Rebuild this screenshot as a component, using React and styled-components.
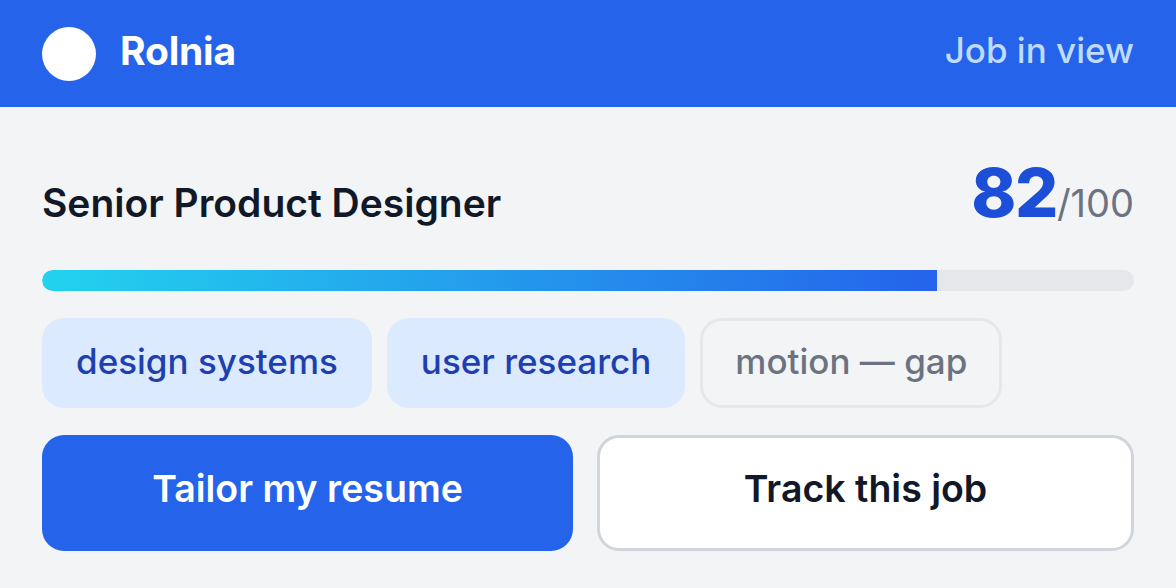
import React from 'react';
import styled, { createGlobalStyle } from 'styled-components';

const GlobalStyle = createGlobalStyle`
  html, body {
    margin: 0;
    padding: 0;
    background: #f3f4f6;
    font-family: Inter, "Noto Sans", sans-serif;
  }
`;

const tags = [
  { label: 'design systems', gap: false },
  { label: 'user research', gap: false },
  { label: 'motion — gap', gap: true },
];

const score = 82;

const App = () => {
  return (
    <Page>
      <GlobalStyle />
      <Header>
        <Brand>
          <Logo />
          <BrandName>Rolnia</BrandName>
        </Brand>
        <HeaderNote>Job in view</HeaderNote>
      </Header>
      <Content>
        <TitleRow>
          <JobTitle>Senior Product Designer</JobTitle>
          <Score>
            <ScoreValue>{score}</ScoreValue>
            <ScoreMax>/100</ScoreMax>
          </Score>
        </TitleRow>
        <Track>
          <Fill style={{ width: `${score}%` }} />
        </Track>
        <TagList>
          {tags.map((tag) => (
            <Tag key={tag.label} $gap={tag.gap}>
              {tag.label}
            </Tag>
          ))}
        </TagList>
        <Actions>
          <Button $primary>Tailor my resume</Button>
          <Button>Track this job</Button>
        </Actions>
      </Content>
    </Page>
  );
};

const Page = styled.div`
  width: 1176px;
  height: 588px;
  background: #f3f4f6;
  overflow: hidden;
`;

const Header = styled.header`
  height: 107px;
  padding: 0 42px;
  background: #2563eb;
  display: flex;
  align-items: center;
  justify-content: space-between;
`;

const Brand = styled.div`
  display: flex;
  align-items: center;
  gap: 24px;
`;

const Logo = styled.div`
  width: 54px;
  height: 54px;
  border-radius: 50%;
  background: #ffffff;
`;

const BrandName = styled.span`
  margin-bottom: 7px;
  color: #ffffff;
  font-size: 39px;
  font-weight: 700;
  letter-spacing: -0.2px;
`;

const HeaderNote = styled.span`
  margin-bottom: 8px;
  color: #bfdbfe;
  font-size: 35px;
  font-weight: 500;
`;

const Content = styled.main`
  padding: 0 42px;
  display: flex;
  flex-direction: column;
`;

const TitleRow = styled.div`
  display: flex;
  align-items: baseline;
  justify-content: space-between;
  margin-top: 51px;
  margin-bottom: 44px;
  line-height: 1;
`;

const JobTitle = styled.h1`
  margin: 0;
  color: #111827;
  font-size: 39px;
  font-weight: 600;
`;

const Score = styled.div`
  display: flex;
  align-items: baseline;
`;

const ScoreValue = styled.span`
  color: #1d4ed8;
  font-size: 68px;
  font-weight: 800;
  letter-spacing: -1.5px;
`;

const ScoreMax = styled.span`
  color: #6b7280;
  font-size: 38px;
  font-weight: 400;
`;

const Track = styled.div`
  height: 21px;
  border-radius: 11px;
  background: #e5e7eb;
  overflow: hidden;
`;

const Fill = styled.div`
  height: 100%;
  border-radius: 11px 0 0 11px;
  background: linear-gradient(90deg, #22d3ee, #2563eb);
`;

const TagList = styled.div`
  display: flex;
  gap: 15px;
  margin-top: 27px;
`;

const Tag = styled.span`
  box-sizing: border-box;
  height: 90px;
  padding: 0 ${(p) => (p.$gap ? '32px' : '31px')} 4px;
  display: flex;
  align-items: center;
  border-radius: 22px;
  font-size: 35px;
  font-weight: 500;
  color: ${(p) => (p.$gap ? '#6b7280' : '#1e40af')};
  background: ${(p) => (p.$gap ? 'transparent' : '#dbeafe')};
  border: 3px solid ${(p) => (p.$gap ? '#e5e7eb' : 'transparent')};
`;

const Actions = styled.div`
  display: flex;
  gap: 24px;
  margin-top: 27px;
`;

const Button = styled.button`
  flex: 1 1 0;
  box-sizing: content-box;
  height: ${(p) => (p.$primary ? '106px' : '100px')};
  padding: 0 0 10px;
  border-radius: 22px;
  font-family: Inter, "Noto Sans", sans-serif;
  font-size: 37.5px;
  font-weight: 600;
  cursor: pointer;
  color: ${(p) => (p.$primary ? '#ffffff' : '#111827')};
  background: ${(p) => (p.$primary ? '#2563eb' : '#ffffff')};
  border: ${(p) => (p.$primary ? 'none' : '3px solid #d1d5db')};
`;

export default App;
